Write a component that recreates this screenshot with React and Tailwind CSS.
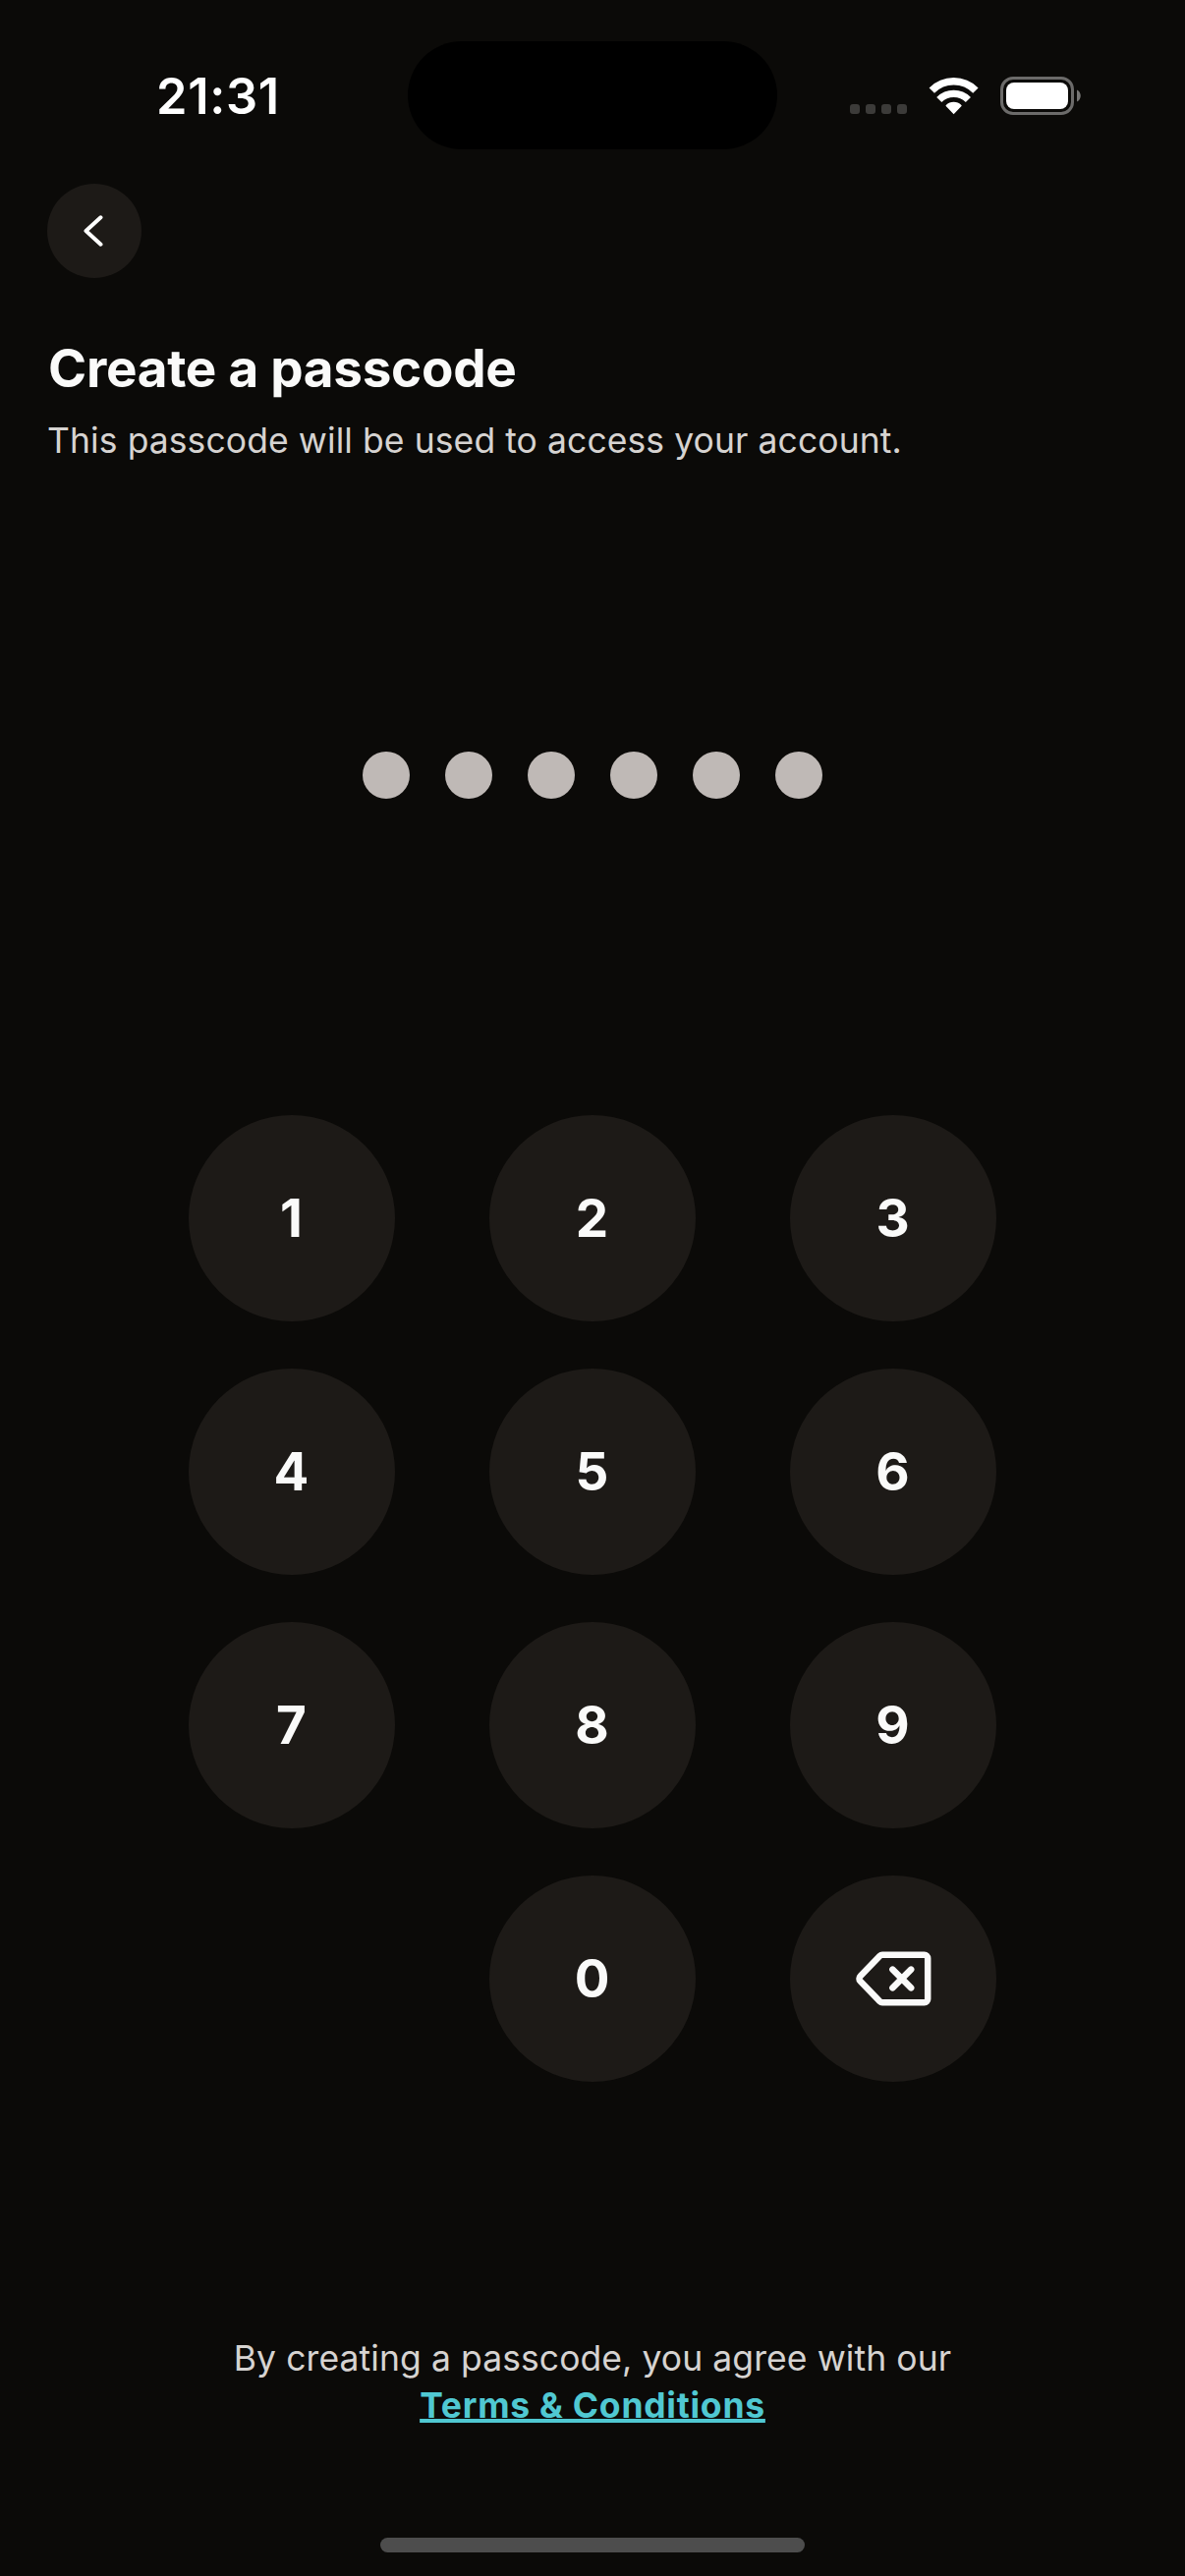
const keys = ['1', '2', '3', '4', '5', '6', '7', '8', '9', null, '0', 'delete'];

function StatusBar() {
  return (
    <header className="grid h-[187px] shrink-0 grid-cols-[415px_376px_415px] items-start text-white">
      <div className="flex h-[196px] items-center pl-[159px]">
        <span className="text-[50.5px] leading-[60px] font-semibold tracking-[0.7px]">21:31</span>
      </div>
      <div className="mt-[42px] h-[110px] rounded-full bg-black" />
      <div className="flex pt-[78px] pl-[74px]">
        <div className="mt-7 flex gap-1.5">
          {[0, 1, 2, 3].map((i) => (
            <span key={i} className="size-2.5 rounded-[3px] bg-[#3c3b39]" />
          ))}
        </div>
        <svg className="ml-[22px] h-[40px] w-[52px]" viewBox="0 0 52 40" fill="none">
          <path d="M3.3 14.2a31.2 31.2 0 0 1 44.6 0" stroke="white" strokeWidth="7.5" />
          <path d="M10.8 23.5a21 21 0 0 1 29.6 0" stroke="white" strokeWidth="7.3" />
          <path d="M25.6 38.3l-7.9-8.2q-.4-.5.1-1a11 11 0 0 1 15.6 0q.5.5.1 1z" fill="white" />
        </svg>
        <svg className="ml-[21px] h-[40px] w-[84px]" viewBox="0 0 84 40" fill="none">
          <rect x="1.5" y="1.5" width="72" height="36" rx="11.5" stroke="#6c6b6a" strokeWidth="3" />
          <rect x="6" y="6" width="63" height="27" rx="8" fill="white" />
          <path d="M78 13.5c5 2 5 10 0 12z" fill="#777675" />
        </svg>
      </div>
    </header>
  );
}

function DeleteIcon() {
  return (
    <svg className="h-[56px] w-[77px]" viewBox="0 0 77 56" fill="none" stroke="#fafaf9" strokeWidth="6.5" strokeLinecap="round" strokeLinejoin="round">
      <path d="M27 3.8H69.7a3.5 3.5 0 0 1 3.5 3.5v41.4a3.5 3.5 0 0 1-3.5 3.5H27a3.5 3.5 0 0 1-2.5-1L4.5 30.5a3.5 3.5 0 0 1 0-5L24.5 4.8a3.5 3.5 0 0 1 2.5-1Z" />
      <path d="M37.4 18.6l18.8 18.8M56.2 18.6l-18.8 18.8" />
    </svg>
  );
}

function Key({ value }) {
  if (!value) return <span />;
  return (
    <button aria-label={value} className="flex size-[210px] items-center justify-center rounded-full bg-[#1d1a17] text-[53px] leading-none font-bold text-stone-50">
      {value === 'delete' ? <DeleteIcon /> : <span className="mt-px mr-px">{value}</span>}
    </button>
  );
}

export default function App() {
  return (
    <main className="flex h-[2622px] w-[1206px] flex-col overflow-hidden bg-[#0b0a08] font-['Inter',sans-serif] text-stone-300">
      <StatusBar />
      <section className="px-12">
        <button aria-label="Back" className="flex size-24 items-center justify-center rounded-full bg-[#1d1a17]">
          <svg className="mr-[3px] h-[32px] w-[20px]" viewBox="0 0 20 32" fill="none" stroke="white" strokeWidth="4" strokeLinecap="round" strokeLinejoin="round">
            <path d="M17.5 2.3L2.5 16l15 13.7" />
          </svg>
        </button>
        <h1 className="mt-[54px] pl-px text-[53px] leading-[76px] font-bold tracking-[-0.28px] whitespace-nowrap text-stone-50">Create a passcode</h1>
        <p className="mt-[12px] text-[35.5px] leading-[48px] tracking-[0.08px] whitespace-nowrap">This passcode will be used to access your account.</p>
      </section>
      <div className="mt-[292px] flex justify-center gap-9">
        {[0, 1, 2, 3, 4, 5].map((i) => (
          <span key={i} className="size-12 rounded-full bg-[#bfb9b6]" />
        ))}
      </div>
      <section className="mt-[322px] grid grid-cols-[repeat(3,210px)] justify-center gap-x-24 gap-y-12">
        {keys.map((value, i) => (
          <Key key={i} value={value} />
        ))}
      </section>
      <footer className="mt-[258px] flex flex-col items-center text-[35.5px] leading-[48px] whitespace-nowrap">
        <p className="tracking-[0.08px]">By creating a passcode, you agree with our</p>
        <a className="font-bold tracking-[0.75px] text-[#50c8d2] underline decoration-[4px] underline-offset-[1px] [text-decoration-skip-ink:none]">Terms &amp; Conditions</a>
      </footer>
      <div className="mx-auto mt-auto mb-6 h-[15px] w-[432px] shrink-0 rounded-full bg-[#4d4d4d]" />
    </main>
  );
}
